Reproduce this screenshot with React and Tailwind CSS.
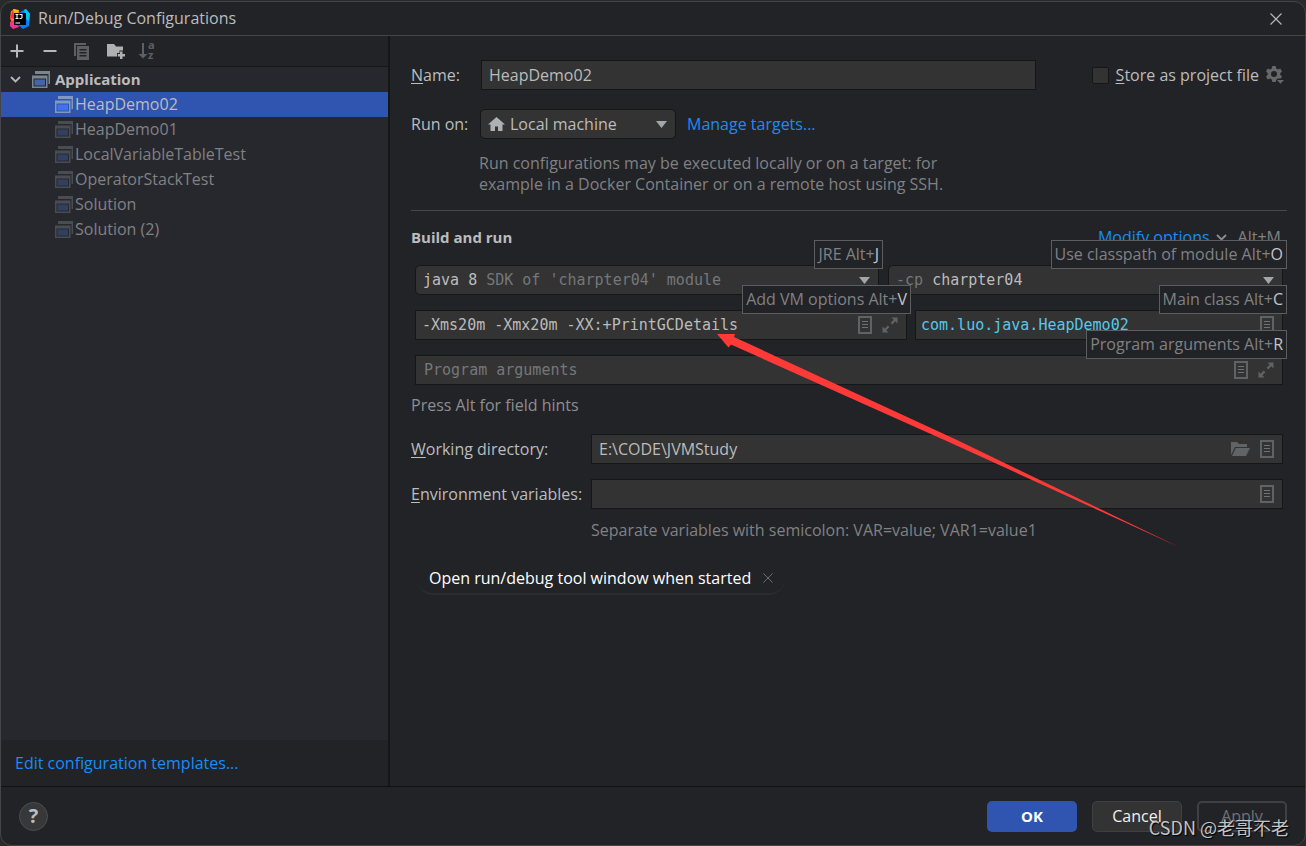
import { useState } from 'react';

const configs = ['HeapDemo02', 'HeapDemo01', 'LocalVariableTableTest', 'OperatorStackTest', 'Solution', 'Solution (2)'];

const fieldCls = 'h-[30px] w-full bg-[#333333] border border-[#151617] text-[#bbbbbb] outline-none';
const monoCls = "font-['DejaVu_Sans_Mono','Liberation_Mono',monospace] text-[15px]";

/* ---------- icons ---------- */
function IdeaLogo() {
  return (
    <svg width="20" height="20" viewBox="0 0 20 20" aria-hidden="true">
      <path d="M1 2 L5 0 L10 4 L7 16 L2 14 L0 9 Z" fill="#f97a12"/>
      <path d="M0 9 L3 1 L6 4 L5 10 Z" fill="#fe2857"/>
      <path d="M3 0 L9 1 L8 5 L4 5 Z" fill="#fdb60d"/>
      <path d="M0 13 L5 11 L9 18 L3 20 L0 17 Z" fill="#fe2f8e"/>
      <path d="M10 3 L16 0 L20 5 L19 17 L13 20 L8 16 Z" fill="#087cfa"/>
      <path d="M14 1 L16 0 L20 5 L19 12 L16 10 Z" fill="#07c3f2"/>
      <rect x="4" y="4" width="12" height="12" fill="#000"/>
      <path d="M5.500 5.500H8.500M7 5.500V9.500M5.500 9.500H8.500M9.500 5.500H12V8.500Q12 9.600 9.500 9.500" stroke="#fff" strokeWidth="1.100" fill="none"/>
      <path d="M5.500 14H10" stroke="#fff" strokeWidth="1.200"/>
    </svg>
  );
}

function AppIcon({ selected, faded }) {
  const frame = selected ? '#8299bf' : '#7b868c';
  const fill = selected ? '#4173e8' : '#4264ae';
  return (
    <svg width="18" height="17" viewBox="0 0 18 17" className={`shrink-0 ${faded ? 'opacity-40' : ''}`} aria-hidden="true">
      <path d="M3 0H18V13H16.500V3H3Z" fill={frame}/>
      <path fillRule="evenodd" d="M0 4.500H15.500V17H0ZM1.500 7.500V15.500H14V7.500Z" fill={frame}/>
      <rect x="2.500" y="8.500" width="10.500" height="6" fill={fill}/>
    </svg>
  );
}

function CopyIcon() {
  return (
    <svg width="16" height="17" viewBox="0 0 16 17" fill="#5d5f61" aria-hidden="true">
      <path d="M0 0H12V2H2V13H0Z"/>
      <path fillRule="evenodd" d="M3 3H15V17H3ZM5.500 6V7.500H12.500V6ZM5.500 9V10.500H12.500V9ZM5.500 12V13.500H12.500V12Z"/>
    </svg>
  );
}

function NewFolderIcon() {
  return (
    <svg width="18" height="16" viewBox="0 0 18 16" fill="#aeb0b2" aria-hidden="true">
      <path d="M0 1H7L9 3.500H16V7.500H12.500V10H10V13.500H0Z"/>
      <path d="M13 8.500H15.500V11H18V13.500H15.500V16H13V13.500H10.800V11H13Z"/>
    </svg>
  );
}

function SortIcon() {
  return (
    <svg width="17" height="18" viewBox="0 0 17 18" fill="#5d5f61" className="overflow-visible" aria-hidden="true">
      <path d="M4 1H6V12H9.500L5 16.500L0.500 12H4Z"/>
      <text x="10" y="7" fontSize="11" fontWeight="700" fontFamily="Open Sans, sans-serif">a</text>
      <text x="10" y="17" fontSize="11" fontWeight="700" fontFamily="Open Sans, sans-serif">z</text>
    </svg>
  );
}

function ListIcon() {
  return (
    <svg width="14" height="18" viewBox="0 0 14 18" aria-hidden="true">
      <rect x="1" y="1" width="12" height="16" fill="none" stroke="#5f6365" strokeWidth="2"/>
      <path d="M4 5.500H10M4 8.500H10M4 11.500H10" stroke="#6e7274" strokeWidth="1.200"/>
    </svg>
  );
}

function ExpandIcon() {
  return (
    <svg width="16" height="16" viewBox="0 0 16 16" aria-hidden="true">
      <path d="M9.500 0.500H15.500V6.500L13.300 4.300L10.200 7.400L8.600 5.800L11.700 2.700Z" fill="#606365"/>
      <path d="M6.500 15.500H0.500V9.500L2.700 11.700L5.800 8.600L7.400 10.200L4.300 13.300Z" fill="#606365"/>
    </svg>
  );
}

function FolderOpenIcon() {
  return (
    <svg width="19" height="14" viewBox="0 0 19 14" fill="#5f6567" aria-hidden="true">
      <path d="M0 0H6L8 2H16V5H4L0 13Z"/>
      <path d="M4.800 6H19L15 14H1Z"/>
    </svg>
  );
}

function HomeIcon() {
  return (
    <svg width="17" height="14" viewBox="0 0 17 14" fill="#aeb0b2" aria-hidden="true">
      <path d="M8.500 0L17 7.500H14.500V14H10V9.500H7V14H2.500V7.500H0Z"/>
    </svg>
  );
}

function GearIcon() {
  return (
    <svg width="18" height="18" viewBox="0 0 18 18" fill="#66686a" aria-hidden="true">
      <path fillRule="evenodd" d="M6.300 0H9.700L10.200 2.400L12 3.400L14.300 2.600L16 5.500L14.200 7.200V8.800L16 10.500L14.800 12.500H11.500L10.300 14L9.700 16H6.300L5.800 13.600L4 12.600L1.700 13.400L0 10.500L1.800 8.800V7.200L0 5.500L1.700 2.600L4 3.400L5.800 2.400ZM8 5A3 3 0 1 0 8 11A3 3 0 1 0 8 5Z"/>
      <path d="M11 14H18L14.500 17.800Z"/>
    </svg>
  );
}

function Caret() {
  return (
    <svg width="11" height="7" viewBox="0 0 11 7" fill="#a3a6aa" aria-hidden="true"><path d="M0 0H11L5.500 7Z"/></svg>
  );
}

function Cross({ size, color }) {
  return (
    <svg width={size} height={size} viewBox="0 0 12 12" stroke={color} strokeWidth="1.200" aria-hidden="true"><path d="M0.500 0.500L11.500 11.500M11.500 0.500L0.500 11.500"/></svg>
  );
}

function Chevron({ color }) {
  return (
    <svg width="11" height="7" viewBox="0 0 11 7" fill="none" stroke={color} strokeWidth="1.800" aria-hidden="true"><path d="M1 1L5.500 5.500L10 1"/></svg>
  );
}

/* ---------- small parts ---------- */
// first letter underlined = keyboard mnemonic
function Mnemonic({ text }) {
  return <span><u className="decoration-1 underline-offset-2">{text[0]}</u>{text.slice(1)}</span>;
}

function Hint({ label, mnemonic }) {
  return (
    <span className="absolute -top-[25px] -right-1 z-10 h-[29px] px-[3px] flex items-center whitespace-nowrap bg-[#222327] border border-[#5b5d5f] text-[#808183]">
      {label} Alt+<span className="text-[#c4c5c7]">{mnemonic}</span>
    </span>
  );
}

function FieldIcons({ children }) {
  return <div className="absolute right-[9px] inset-y-0 flex items-center gap-[10px]">{children}</div>;
}

function IconBtn({ label, children }) {
  return <button type="button" aria-label={label} className="flex items-center justify-center">{children}</button>;
}

// two-tone combo: the native select sits on top, the coloured text shows through
function Combo({ label, value, children }) {
  return (
    <div className={`relative h-[30px] pl-[7px] pr-2 flex items-center bg-[#333333] border border-[#151617] rounded-[5px] ${monoCls}`}>
      <span className="flex-1 whitespace-pre">{children}</span>
      <Caret/>
      <select aria-label={label} className="absolute inset-0 w-full h-full opacity-0"><option>{value}</option></select>
    </div>
  );
}

export default function App() {
  const [active, setActive] = useState('HeapDemo02');
  const [name, setName] = useState('HeapDemo02');
  const [vmOptions, setVmOptions] = useState('-Xms20m -Xmx20m -XX:+PrintGCDetails');
  const [mainClass, setMainClass] = useState('com.luo.java.HeapDemo02');
  const [workDir, setWorkDir] = useState('E:\\CODE\\JVMStudy');

  return (
    <div className="min-h-screen pt-px flex bg-[#2a2a2c]">
      <div className="relative flex-1 flex flex-col bg-[#222327] border border-[#434547] rounded-xl overflow-hidden font-['Open_Sans','Noto_Sans_CJK_SC',sans-serif] text-base leading-[21px] text-[#bbbcbe]">
        {/* Title bar */}
        <header className="h-[34px] shrink-0 flex items-center gap-2 pl-[9px] pr-[23px] border-b border-[#434547]">
          <IdeaLogo/>
          <h1 className="flex-1">Run/Debug Configurations</h1>
          <IconBtn label="Close"><Cross size={12} color="#b5b6b8"/></IconBtn>
        </header>

        <div className="flex-1 flex">
          {/* Sidebar */}
          <aside className="w-[389px] shrink-0 flex flex-col border-r-2 border-[#151617]">
            <div className="h-[31px] flex items-center pl-[9px] gap-[17px] border-b border-[#151617]">
              <IconBtn label="Add">
                <svg width="14" height="14" viewBox="0 0 14 14" stroke="#b5b7b9" strokeWidth="2" aria-hidden="true"><path d="M7 0.500V13.500M0.500 7H13.500"/></svg>
              </IconBtn>
              <IconBtn label="Remove">
                <svg width="16" height="14" viewBox="0 0 16 14" stroke="#b5b7b9" strokeWidth="2" aria-hidden="true"><path d="M2.500 7H15.500"/></svg>
              </IconBtn>
              <IconBtn label="Copy"><CopyIcon/></IconBtn>
              <IconBtn label="New folder"><NewFolderIcon/></IconBtn>
              <button type="button" aria-label="Sort" className="-ml-1"><SortIcon/></button>
            </div>
            <div className="flex-1 bg-[#27282e]">
              <div className="h-[25px] flex items-center pl-[9px] text-[15px] font-bold">
                <Chevron color="#b5b7b9"/>
                <span className="w-[11px]"/>
                <AppIcon/>
                <span className="pl-[5px]">Application</span>
              </div>
              <ul>
                {configs.map(c => (
                  <li key={c}>
                    <button type="button" onClick={() => setActive(c)}
                      className={`w-full h-[25px] flex items-center pl-[54px] gap-[2px] text-left ${active===c ? 'bg-[#2f55b0] text-[#bbbcbe]' : 'text-[#808183]'}`}>
                      <AppIcon selected={active===c} faded={active!==c}/>
                      {c}
                    </button>
                  </li>
                ))}
              </ul>
            </div>
            <div className="h-[46px] flex items-center pl-[14px]">
              <a href="#templates" className="text-[#1a8cf5]">Edit configuration templates...</a>
            </div>
          </aside>

          {/* Form */}
          <main className="flex-1 min-w-0 pl-[21px] pr-[18px] pt-6">
            <div className="h-[30px] flex items-center">
              <label htmlFor="name" className="w-[70px] shrink-0"><Mnemonic text="Name:"/></label>
              <input id="name" value={name} onChange={e=>setName(e.target.value)} className={`${fieldCls} flex-1 min-w-0 px-[7px]`}/>
              <label className="ml-14 flex items-center gap-[7px] whitespace-nowrap">
                <input type="checkbox" className="appearance-none size-[17px] rounded-[2px] bg-[#333333] border border-[#151617]"/>
                <Mnemonic text="Store as project file"/>
              </label>
              <span className="pl-[7px] pr-[3px] shrink-0"><IconBtn label="Storage settings"><GearIcon/></IconBtn></span>
            </div>

            <div className="mt-[19px] h-[30px] flex items-center">
              <label htmlFor="target" className="w-[69px]">Run on:</label>
              <div className="relative w-[196px]">
                <select id="target" className={`${fieldCls} appearance-none rounded-[5px] pl-[29px]`}><option>Local machine</option></select>
                <span className="absolute left-2 inset-y-0 flex items-center pointer-events-none"><HomeIcon/></span>
                <span className="absolute right-[9px] inset-y-0 flex items-center pointer-events-none"><Caret/></span>
              </div>
              <a href="#targets" className="ml-[11px] text-[#1a8cf5]">Manage targets...</a>
            </div>
            <p className="mt-[14px] pl-[68px] text-[#808183]">
              Run configurations may be executed locally or on a target: for<br/>
              example in a Docker Container or on a remote host using SSH.
            </p>

            <section className="mt-[15px] pt-4 border-t border-[#46484a]">
              <div className="flex items-center pr-[6px]">
                <h2 className="flex-1 text-[15px] font-bold">Build and run</h2>
                <button type="button" className="flex items-center gap-[6px] text-[#1a8cf5]">Modify options <Chevron color="#8b8d8f"/></button>
                <span className="ml-[11px] text-[#808183]">Alt+M</span>
              </div>

              <div className="px-1 mt-[17px] flex flex-col gap-[15px]">
                <div className="grid grid-cols-[464fr_395fr] gap-[9px]">
                  <div className="relative">
                    <Combo label="JRE" value="java 8">java 8 <span className="text-[#75777a]">SDK of 'charpter04' module</span></Combo>
                    <Hint label="JRE" mnemonic="J"/>
                  </div>
                  <div className="relative">
                    <Combo label="Use classpath of module" value="charpter04"><span className="text-[#75777a]">-cp </span>charpter04</Combo>
                    <Hint label="Use classpath of module" mnemonic="O"/>
                  </div>
                </div>

                <div className="grid grid-cols-[492fr_368fr] gap-2">
                  <div className="relative">
                    <input aria-label="Add VM options" value={vmOptions} onChange={e=>setVmOptions(e.target.value)} className={`${fieldCls} ${monoCls} pl-[6px] pr-16`}/>
                    <FieldIcons>
                      <IconBtn label="Insert macro"><ListIcon/></IconBtn>
                      <IconBtn label="Expand"><ExpandIcon/></IconBtn>
                    </FieldIcons>
                    <Hint label="Add VM options" mnemonic="V"/>
                    {/* pointer drawn from the lower right up to the VM options */}
                    <svg className="absolute left-[302px] top-6 z-20 pointer-events-none" width="464" height="214" viewBox="0 0 464 214" aria-hidden="true">
                      <path d="M0 0H18L17 3L240 106L463 213.500L234 109L14 10.500L11.500 13.500Z" fill="#fd3a38"/>
                    </svg>
                  </div>
                  <div className="relative">
                    <input aria-label="Main class" value={mainClass} onChange={e=>setMainClass(e.target.value)} className={`h-[30px] w-full bg-[#333333] border border-[#151617] outline-none text-[#56c8e8] pl-[5px] pr-9 ${monoCls}`}/>
                    <FieldIcons><IconBtn label="Browse class"><ListIcon/></IconBtn></FieldIcons>
                    <Hint label="Main class" mnemonic="C"/>
                  </div>
                </div>

                <div className="relative">
                  <input aria-label="Program arguments" placeholder="Program arguments" className={`${fieldCls} ${monoCls} px-2 placeholder:text-[#75777a]`}/>
                  <FieldIcons>
                    <IconBtn label="Insert macro"><ListIcon/></IconBtn>
                    <IconBtn label="Expand"><ExpandIcon/></IconBtn>
                  </FieldIcons>
                  <Hint label="Program arguments" mnemonic="R"/>
                </div>
              </div>
              <p className="mt-[10px] text-[#8d8e90]">Press Alt for field hints</p>
            </section>

            <div className="mt-[18px] pr-1 grid grid-cols-[180px_1fr] gap-y-[15px] items-center">
              <label htmlFor="wd"><Mnemonic text="Working directory:"/></label>
              <div className="relative">
                <input id="wd" value={workDir} onChange={e=>setWorkDir(e.target.value)} className={`${fieldCls} pl-[7px] pr-16`}/>
                <FieldIcons>
                  <IconBtn label="Browse"><FolderOpenIcon/></IconBtn>
                  <IconBtn label="Insert macro"><ListIcon/></IconBtn>
                </FieldIcons>
              </div>
              <label htmlFor="env"><Mnemonic text="Environment variables:"/></label>
              <div className="relative">
                <input id="env" className={`${fieldCls} pl-[7px] pr-9`}/>
                <FieldIcons><IconBtn label="Edit variables"><ListIcon/></IconBtn></FieldIcons>
              </div>
            </div>
            <p className="mt-[11px] pl-[180px] text-[#808183]">Separate variables with semicolon: VAR=value; VAR1=value1</p>

            <div className="mt-[22px] ml-[6px] inline-flex items-center gap-3 h-8 px-3 rounded-2xl border-b-2 border-[#2b2c2f] text-white">
              Open run/debug tool window when started
              <IconBtn label="Remove option"><Cross size={10} color="#6a6c6e"/></IconBtn>
            </div>
          </main>
        </div>

        {/* Footer */}
        <footer className="h-[59px] shrink-0 flex items-center gap-[15px] pl-[18px] pr-[18px] border-t border-[#101112]">
          <button type="button" aria-label="Help" className="size-[29px] mr-auto rounded-full bg-[#37383a] border border-[#4b4d4f] text-xl font-bold flex items-center justify-center">?</button>
          <button type="button" className="w-[90px] h-[31px] rounded-[5px] bg-[#2f55b0] text-white text-[15px] font-bold">OK</button>
          <button type="button" className="w-[90px] h-[31px] rounded-[5px] bg-[#333333] border border-[#3f4042] text-[#f0f0f0]">Cancel</button>
          <button type="button" disabled className="w-[90px] h-[31px] rounded-[5px] border-2 border-[#3f4042] text-[#6f7173]">Apply</button>
        </footer>
        <p className="absolute right-4 bottom-[6px] z-30 text-lg leading-6 text-[#c3c4c6] pointer-events-none font-['Noto_Sans_CJK_SC',sans-serif] [text-shadow:1px_1px_1px_#000]">CSDN @老哥不老</p>
      </div>
    </div>
  );
}
